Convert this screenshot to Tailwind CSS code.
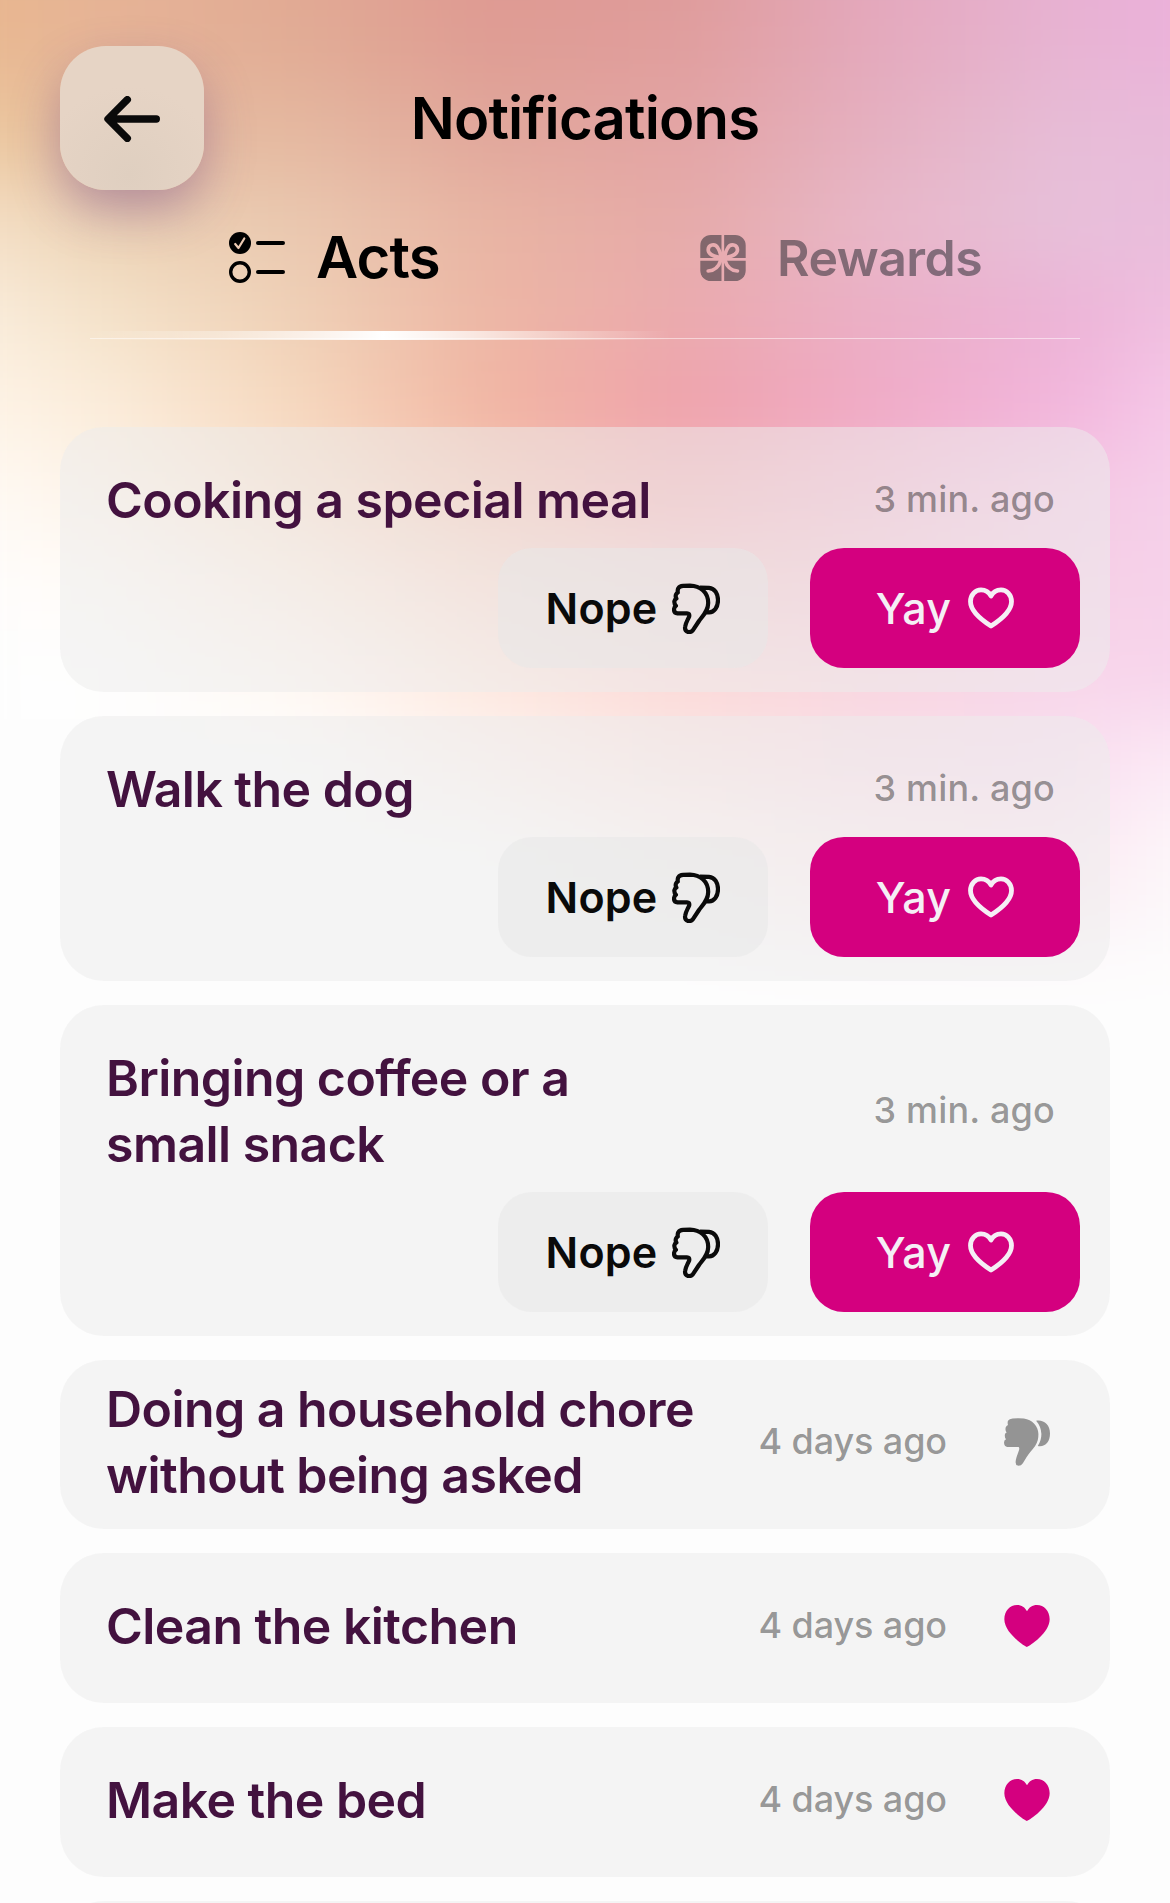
<!DOCTYPE html>
<html lang="en">
  <head>
    <meta charset="UTF-8" />
    <meta name="viewport" content="width=device-width, initial-scale=1.0" />
    <script src="https://cdn.jsdelivr.net/npm/@tailwindcss/browser@4"></script>
    <title>Notifications</title>
  </head>
  <body class="bg-[#fdfdfd] font-['Inter','Liberation_Sans',sans-serif] text-black">
    <div class="relative w-[1170px] h-[1903px] overflow-hidden">

      <!-- mesh gradient: colour strips blurred into each other -->
      <div class="absolute inset-x-0 top-0 h-[1080px] overflow-hidden">
        <div class="absolute -top-[180px] -left-20 w-[1330px] blur-[36px]">
          <div class="h-[180px] bg-[linear-gradient(90deg,#e9b68a,#e5b294,#e2a893,#de9892,#de9a98,#e3a7bc,#e7b0d3,#efaee0)]"></div>
          <div class="h-[90px] bg-[linear-gradient(90deg,#eabb8e,#e6b498,#e1ac95,#df9c93,#e09e9d,#e4a9bc,#e7b4d2,#eeb2df)]"></div>
          <div class="h-[90px] bg-[linear-gradient(90deg,#efcf9f,#e5bb9e,#e5b9a1,#e1a79b,#e3a4a4,#e5b0c0,#e7bdd7,#eab9dc)]"></div>
          <div class="h-[90px] bg-[linear-gradient(90deg,#f8e6cf,#ecd2b4,#eac8b0,#e8b4a3,#e6aaa8,#e8b7c8,#e7c0da,#ebbbdd)]"></div>
          <div class="h-[90px] bg-[linear-gradient(90deg,#fcf1e4,#f4e2c9,#efd0b6,#edb6a4,#ebaaae,#ebafc6,#ecb3d6,#f3c6e6)]"></div>
          <div class="h-[90px] bg-[linear-gradient(90deg,#fff7ec,#fbecda,#f6d8be,#f1b5a2,#efa2ab,#f0aac6,#f2b5dc,#f8d4f0)]"></div>
          <div class="h-[90px] bg-[linear-gradient(90deg,#fffdfa,#fdf3e8,#f9e0cd,#f6c6b5,#f3b3b8,#f3bbcf,#f4c8e3,#f7d4ee)]"></div>
          <div class="h-[90px] bg-[linear-gradient(90deg,#fefefe,#fffbf7,#fdeee2,#fadbcf,#f7cbcb,#f5c8d6,#f6cfe5,#f6d4ed)]"></div>
          <div class="h-[90px] bg-[linear-gradient(90deg,#fdfdfd,#fefefe,#fff8f2,#fde8df,#fbdad8,#f9d6e0,#f8d6ea,#f7d4ed)]"></div>
          <div class="h-[90px] bg-[linear-gradient(90deg,#fdfdfd,#fdfdfd,#fdfdfd,#fdf3ef,#fbe6e4,#f9dfe8,#f9deef,#fdf2fa)]"></div>
          <div class="h-[90px] bg-[linear-gradient(90deg,#fdfdfd,#fdfdfd,#fdfdfd,#fdfdfd,#fdf5f3,#fcecf0,#fbe9f2,#fefefe)]"></div>
          <div class="h-[50px] bg-[linear-gradient(90deg,#fdfdfd,#fdfdfd,#fdfdfd,#fdfdfd,#fdfbfb,#fdf4f6,#fcf3f7,#fdfdfd)]"></div>
          <div class="h-[210px] bg-[#fdfdfd]"></div>
        </div>
      </div>

      <div class="relative">
        <!-- header -->
        <header class="grid grid-cols-[144px_1fr_144px] items-center px-[60px] pt-[46px]">
          <button class="flex h-36 w-36 items-center justify-center rounded-[46px] bg-[radial-gradient(circle_at_48%_90%,#dfcfc0,#e6d4c5_60%)] shadow-[0_22px_50px_-2px_rgba(105,60,130,0.42)]">
            <svg class="mt-0.5 h-[46px] w-14" viewBox="0 0 56 46" fill="none" stroke="#0a0a0a" stroke-width="7.4" stroke-linecap="round" stroke-linejoin="round">
              <path d="M23.3 3.7L4 23l19.3 19.3M5 23h47.3" />
            </svg>
          </button>
          <h1 class="text-center text-[58px] font-semibold leading-none tracking-[-0.8px]">Notifications</h1>
        </header>

        <!-- tabs -->
        <nav class="mx-[90px] mt-[26px] grid grid-cols-2">
          <div class="flex h-[84px] items-center gap-[31px] pl-[139px]">
            <svg class="h-[52px] w-14 shrink-0" viewBox="0 0 56 52">
              <circle cx="11" cy="11" r="11" />
              <path d="M6.2 12l3.3 4 5.8-9.5" fill="none" stroke="#edcab2" stroke-width="2.2" stroke-linecap="round" stroke-linejoin="round" />
              <circle cx="11" cy="40" r="9.3" fill="none" stroke="#000" stroke-width="3.4" />
              <path d="M29 11h25M29 40h25" stroke="#000" stroke-width="4" stroke-linecap="round" />
            </svg>
            <span class="-mt-0.5 text-[58px] font-semibold leading-none tracking-[-0.8px]">Acts</span>
          </div>
          <div class="flex h-[84px] items-center gap-[31px] pl-[115px] text-[#2e2e36] opacity-54">
            <svg class="h-[46px] w-[46px] shrink-0" viewBox="0 0 137 138">
              <mask id="bow">
                <rect width="137" height="138" fill="#fff" />
                <g fill="none" stroke="#000" stroke-linecap="round">
                  <path d="M68 0V138M0 73H137" stroke-width="8" />
                  <path d="M63 69C48 64 25 62 24 45C24 28 45 24 54 40C60 50 62 58 63 69M73 69C88 64 111 62 112 45C112 28 91 24 82 40C76 50 74 58 73 69M62 75C56 95 44 107 24 108M74 75C80 95 92 107 112 108" stroke-width="11" />
                </g>
              </mask>
              <rect width="137" height="138" rx="32" fill="currentColor" mask="url(#bow)" />
            </svg>
            <span class="text-[50px] font-semibold leading-none tracking-[-0.5px]">Rewards</span>
          </div>
        </nav>
        <div class="mx-[90px] mt-[31px] flex h-[9px] flex-col justify-end bg-[linear-gradient(90deg,transparent,rgba(255,255,255,0.35)_130px,#fff_293px,rgba(255,255,255,0.35)_470px,transparent_580px)]">
          <div class="mb-px h-px bg-white/50"></div>
        </div>

        <svg class="hidden">
          <symbol id="nope" viewBox="0 0 48 51">
            <path d="M6.3 5.2Q7.6 3 11 2.8L18 2.6C28 2.8 36.2 9 36.2 20C36.2 28 31 32.5 27 38L20.8 47.4Q18.8 49.6 16 49Q12.6 48 13.1 44C13.4 40 15.8 37 17.2 33.4Q17.8 30.3 15 30.3H5.5Q2 30 2 26.5Q2.2 24 3.9 22.8Q2 20.5 2.4 18.2Q2.8 16.3 4.4 15.6Q3.2 13.5 4 11.5Q4.5 10.2 5.8 9.6Q5.4 7 6.3 5.2ZM28 4.6L37 4.8C43 5.2 46 11 46 17C46 24.5 42 29.3 37.2 29.3H33.5" fill="none" stroke="currentColor" stroke-width="4.2" stroke-linejoin="round" />
          </symbol>
          <symbol id="yay" viewBox="0 0 46 42">
            <path d="M23 39C12 32 2.5 24 2.5 14.5C2.5 7.5 7.5 2.8 13 2.8C17.5 2.8 21 5 23 9C25 5 28.5 2.8 33 2.8C38.5 2.8 43.5 7.5 43.5 14.5C43.5 24 34 32 23 39Z" fill="none" stroke="currentColor" stroke-width="4.8" stroke-linejoin="round" />
          </symbol>
          <symbol id="nope-fill" viewBox="0 0 139 144">
            <path d="M12 8Q16 2 26 1Q45-1 60 1C85 4 104 25 104 48C104 62 102 72 94 84C84 98 74 108 68 118L57 136Q52 144 44 144Q35 143 35 133C36 120 41 110 45 98Q48 87 43 87L10 87Q1 85 0 74Q0 66 6 64Q1 58 3 48Q5 44 8 43Q3 38 5 28Q7 23 12 21Q10 13 12 8Z" fill="currentColor" />
            <path d="M97 8C120 4 139 20 139 46C139 72 124 88 102 84Q113 68 113 48Q112 25 97 8Z" fill="currentColor" />
          </symbol>
          <symbol id="yay-fill" viewBox="0 0 136 126">
            <path d="M68 126C60 123 0 84 0 43C0 17 17 0 38 0C52 0 62 7 68 19C74 7 84 0 98 0C119 0 136 17 136 43C136 84 76 123 68 126Z" fill="currentColor" />
          </symbol>
        </svg>

        <!-- cards -->
        <main class="mx-[60px] mt-[87px] flex flex-col gap-6">
          <div class="h-[265px] rounded-[44px] bg-[#ededed]/53 pt-10">
            <div class="flex items-center justify-between pl-[46px] pr-[55px]">
              <h2 class="text-[50px] font-semibold leading-[66px] tracking-[-0.55px] text-[#43123f]">Cooking a special meal</h2>
              <span class="-mt-0.5 text-[36px] font-medium tracking-[0.2px] text-black/40">3 min. ago</span>
            </div>
            <div class="mt-[15px] flex justify-end gap-[42px] pr-[30px]">
              <button class="flex h-[120px] w-[270px] items-center justify-center gap-[15px] rounded-[34px] bg-[#e8e8e8]/55 text-[43px] font-semibold tracking-[0.2px] text-[#0a0a0a]">Nope <svg class="h-[51px] w-12"><use href="#nope" /></svg></button>
              <button class="flex h-[120px] w-[270px] items-center justify-center gap-[17px] rounded-[34px] bg-[#d4007f] text-[43px] font-medium tracking-[0.2px] text-[#f5eff5]">Yay <svg class="h-[42px] w-[46px]"><use href="#yay" /></svg></button>
            </div>
          </div>

          <div class="h-[265px] rounded-[44px] bg-[#ededed]/53 pt-10">
            <div class="flex items-center justify-between pl-[46px] pr-[55px]">
              <h2 class="text-[50px] font-semibold leading-[66px] tracking-[-0.55px] text-[#43123f]">Walk the dog</h2>
              <span class="-mt-0.5 text-[36px] font-medium tracking-[0.2px] text-black/40">3 min. ago</span>
            </div>
            <div class="mt-[15px] flex justify-end gap-[42px] pr-[30px]">
              <button class="flex h-[120px] w-[270px] items-center justify-center gap-[15px] rounded-[34px] bg-[#e8e8e8]/55 text-[43px] font-semibold tracking-[0.2px] text-[#0a0a0a]">Nope <svg class="h-[51px] w-12"><use href="#nope" /></svg></button>
              <button class="flex h-[120px] w-[270px] items-center justify-center gap-[17px] rounded-[34px] bg-[#d4007f] text-[43px] font-medium tracking-[0.2px] text-[#f5eff5]">Yay <svg class="h-[42px] w-[46px]"><use href="#yay" /></svg></button>
            </div>
          </div>

          <div class="h-[331px] rounded-[44px] bg-[#ededed]/53 pt-10">
            <div class="flex items-center justify-between pl-[46px] pr-[55px]">
              <h2 class="text-[50px] font-semibold leading-[66px] tracking-[-0.55px] text-[#43123f]">Bringing coffee or a<br />small snack</h2>
              <span class="-mt-0.5 text-[36px] font-medium tracking-[0.2px] text-black/40">3 min. ago</span>
            </div>
            <div class="mt-[15px] flex justify-end gap-[42px] pr-[30px]">
              <button class="flex h-[120px] w-[270px] items-center justify-center gap-[15px] rounded-[34px] bg-[#e8e8e8]/55 text-[43px] font-semibold tracking-[0.2px] text-[#0a0a0a]">Nope <svg class="h-[51px] w-12"><use href="#nope" /></svg></button>
              <button class="flex h-[120px] w-[270px] items-center justify-center gap-[17px] rounded-[34px] bg-[#d4007f] text-[43px] font-medium tracking-[0.2px] text-[#f5eff5]">Yay <svg class="h-[42px] w-[46px]"><use href="#yay" /></svg></button>
            </div>
          </div>

          <div class="flex h-[169px] items-center rounded-[44px] bg-[#ededed]/53 pb-[5px] pl-[46px] pr-[60px]">
            <h2 class="grow text-[50px] font-semibold leading-[66px] tracking-[-0.55px] text-[#43123f]">Doing a household chore<br />without being asked</h2>
            <span class="-mt-0.5 text-[36px] font-medium tracking-[-0.1px] text-black/40">4 days ago</span>
            <svg class="ml-[57px] h-12 w-[46px] text-[#949494]"><use href="#nope-fill" /></svg>
          </div>

          <div class="flex h-[150px] items-center rounded-[44px] bg-[#ededed]/53 pb-[5px] pl-[46px] pr-[60px]">
            <h2 class="grow text-[50px] font-semibold leading-[66px] tracking-[-0.55px] text-[#43123f]">Clean the kitchen</h2>
            <span class="-mt-0.5 text-[36px] font-medium tracking-[-0.1px] text-black/40">4 days ago</span>
            <svg class="ml-[57px] h-[42px] w-[46px] text-[#d4007f]"><use href="#yay-fill" /></svg>
          </div>

          <div class="flex h-[150px] items-center rounded-[44px] bg-[#ededed]/53 pb-[5px] pl-[46px] pr-[60px]">
            <h2 class="grow text-[50px] font-semibold leading-[66px] tracking-[-0.55px] text-[#43123f]">Make the bed</h2>
            <span class="-mt-0.5 text-[36px] font-medium tracking-[-0.1px] text-black/40">4 days ago</span>
            <svg class="ml-[57px] h-[42px] w-[46px] text-[#d4007f]"><use href="#yay-fill" /></svg>
          </div>

          <div class="h-[150px] rounded-[44px] bg-[#ededed]/53"></div>
        </main>
      </div>
    </div>
  </body>
</html>
